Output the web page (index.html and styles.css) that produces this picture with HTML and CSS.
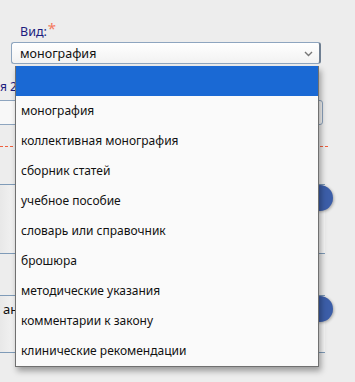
FILE: index.html
```html
<!DOCTYPE html>
<html lang="ru">

<head>
    <meta charset="UTF-8">
    <meta name="viewport" content="width=device-width, initial-scale=1.0">
    <title>Вид издания</title>
    <link rel="stylesheet" href="styles.css">
</head>

<body>
    <div class="form">
        <div class="field">
            <label class="field-label">Вид:<span class="req">*</span></label>
            <div class="select">
                <span class="select-value">монография</span>
                <svg class="chevron" width="9" height="6" viewBox="0 0 9 6">
                    <path d="M1 1 L4.5 4.5 L8 1" fill="none" stroke="#777" stroke-width="1.4"/>
                </svg>
            </div>

            <ul class="options">
                <li class="option selected"></li>
                <li class="option">монография</li>
                <li class="option">коллективная монография</li>
                <li class="option">сборник статей</li>
                <li class="option">учебное пособие</li>
                <li class="option">словарь или справочник</li>
                <li class="option">брошюра</li>
                <li class="option">методические указания</li>
                <li class="option">комментарии к закону</li>
                <li class="option">клинические рекомендации</li>
            </ul>
        </div>

        <!-- content hidden behind the open list -->
        <div class="link-row">я 2</div>
        <div class="input-box"></div>
        <div class="dashed"></div>

        <div class="panel panel-first">
            <span class="round-btn"></span>
        </div>
        <div class="panel panel-second">
            <span class="panel-text">ан</span>
            <span class="round-btn"></span>
        </div>
    </div>
</body>

</html>
```

FILE: styles.css
```css
body {
    margin: 0;
    background-color: #ededed;
    font-family: "Noto Sans", "Open Sans", sans-serif;
    font-size: 12px;
    color: #111;
}

.form {
    width: 355px;
    height: 382px;
    overflow: hidden;
}

.field {
    position: relative;
    padding: 20px 0 0 11px;
}

.field-label {
    display: block;
    margin-left: 9px;
    height: 22px;
    line-height: 20px;
    font-size: 12.5px;
    color: #1c1c7e;
}

.req {
    position: relative;
    top: -2px;
    color: #f47a5e;
    font-size: 15px;
    margin-left: 1px;
}

.select {
    display: flex;
    align-items: center;
    justify-content: space-between;
    box-sizing: border-box;
    width: 310px;
    height: 22px;
    padding: 0 6px 0 8px;
    border: 1px solid #8ea5bf;
    border-right: 2px solid #6f7f92;
    border-radius: 3px;
    background: linear-gradient(#ffffff, #f2f2f2);
    font-size: 12.5px;
}

.chevron {
    margin-top: 1px;
}

.options {
    position: absolute;
    top: 66px;
    left: 15px;
    width: 302px;
    margin: 0;
    padding: 0;
    list-style: none;
    background-color: #fafafa;
    border: 1px solid #707070;
    border-top: none;
    box-shadow: 2px 4px 6px rgba(0, 0, 0, 0.35);
    z-index: 5;
}

.option {
    height: 30px;
    line-height: 30px;
    padding-left: 5px;
    white-space: nowrap;
}

.option.selected {
    background-color: #1a69d4;
}

.link-row {
    margin-top: 15px;
    height: 16px;
    line-height: 16px;
    color: #1c1c7e;
}

.input-box {
    margin: 5px 32px 0 -4px;
    height: 23px;
    border: 1px solid #8ea5bf;
    border-radius: 3px;
    background-color: #f8f8f8;
}

.dashed {
    margin: 21px 27px 0 0;
    border-top: 1px dashed #f0603e;
}

.panel {
    position: relative;
    border-top: 1px solid #7f9bb8;
    border-bottom: 1px solid #7f9bb8;
    background: linear-gradient(90deg, #e8e8e8, #f6f6f6 20px);
    margin-right: 30px;
}

.panel-first {
    margin-top: 37px;
    height: 68px;
}

.panel-second {
    margin-top: 41px;
    height: 56px;
}

.panel-text {
    display: block;
    padding: 4px 0 0 3px;
    line-height: 18px;
    font-size: 13px;
}

.round-btn {
    position: absolute;
    top: 0;
    right: -8px;
    width: 26px;
    height: 26px;
    border-radius: 50%;
    background-color: #3c5ea8;
    box-shadow: 1px 1px 3px rgba(0, 0, 0, 0.3);
}
```
